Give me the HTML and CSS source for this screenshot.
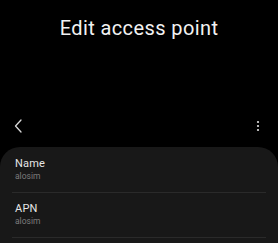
FILE: index.html
```html
<!DOCTYPE html>
<html>
<head>
<meta charset="utf-8">
<link rel="stylesheet" href="styles.css">
</head>
<body>
<div class="screen">
  <header class="hero">
    <h1 class="title">Edit access point</h1>
  </header>
  <div class="toolbar">
    <svg class="back" width="12" height="16" viewBox="0 0 12 16">
      <polyline points="8,2 2.5,8 8,14" fill="none" stroke="#d8d8d8" stroke-width="1.3" stroke-linecap="round" stroke-linejoin="round"/>
    </svg>
    <svg class="more" width="4" height="14" viewBox="0 0 4 14">
      <circle cx="2" cy="3" r="1.1" fill="#e0e0e0"/>
      <circle cx="2" cy="7" r="1.1" fill="#e0e0e0"/>
      <circle cx="2" cy="11" r="1.1" fill="#e0e0e0"/>
    </svg>
  </div>
  <section class="card">
    <div class="row">
      <div class="label">Name</div>
      <div class="value">alosim</div>
    </div>
    <div class="row">
      <div class="label">APN</div>
      <div class="value">alosim</div>
    </div>
  </section>
</div>
</body>
</html>
```

FILE: styles.css
```css
html, body {
  margin: 0;
  padding: 0;
  background: #000;
}
body {
  font-family: Roboto, "Noto Sans", sans-serif;
  width: 278px;
  height: 243px;
  overflow: hidden;
}
.screen {
  display: flex;
  flex-direction: column;
  height: 243px;
}
.hero {
  height: 104px;
  padding-top: 16px;
  box-sizing: border-box;
  flex: none;
}
.title {
  margin: 0;
  text-align: center;
  font-weight: 400;
  font-size: 20px;
  line-height: 24px;
  color: #f2f2f2;
  letter-spacing: 0.4px;
}
.toolbar {
  height: 43px;
  flex: none;
  display: flex;
  align-items: center;
  justify-content: space-between;
  padding: 0 18px 0 13px;
}
.back {
  display: block;
}
.more {
  display: block;
}
.card {
  background: #181818;
  border-radius: 20px 20px 0 0;
  padding: 1px 12px 0;
  flex: 1;
}
.row {
  padding: 9px 3px 10px;
  border-bottom: 1px solid #2a2a2a;
}
.label {
  font-size: 11px;
  line-height: 14px;
  color: #e6e6e6;
  letter-spacing: 0.2px;
}
.value {
  font-size: 8.5px;
  line-height: 11px;
  color: #7c7c7c;
}
```
